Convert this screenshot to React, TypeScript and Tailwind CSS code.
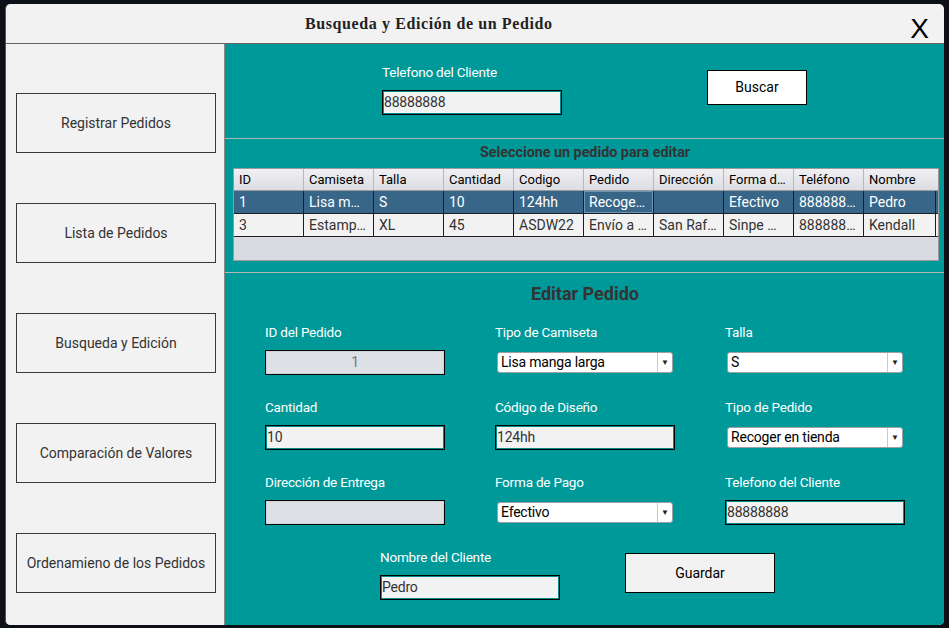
const sideButtons = [
  "Registrar Pedidos",
  "Lista de Pedidos",
  "Busqueda y Edición",
  "Comparación de Valores",
  "Ordenamieno de los Pedidos",
];

const columns = [
  "ID",
  "Camiseta",
  "Talla",
  "Cantidad",
  "Codigo",
  "Pedido",
  "Dirección",
  "Forma de Pago",
  "Teléfono",
  "Nombre",
];

const rows = [
  ["1", "Lisa manga larga", "S", "10", "124hh", "Recoger en tienda", "", "Efectivo", "88888888", "Pedro"],
  ["3", "Estampada", "XL", "45", "ASDW22", "Envío a domicilio", "San Rafael", "Sinpe Móvil", "88888888", "Kendall"],
];

const font = { fontFamily: "Roboto, 'Liberation Sans', sans-serif" };

function Label({ text }: { text: string }) {
  return (
    <div className="h-[16px] text-[13.5px] leading-[16px] text-white tracking-[-0.2px]">
      {text}
    </div>
  );
}

function TextField({ value, disabled }: { value: string; disabled?: boolean }) {
  return (
    <div
      className={`mt-[10px] w-[180px] h-[25px] border border-black flex items-center text-[14px] tracking-[-0.2px] ${
        disabled
          ? "bg-[#dde0e5] justify-center text-[#777] shadow-[inset_0_0_0_1px_#d0d4da]"
          : "bg-[#f2f2f2] text-[#333] shadow-[inset_0_0_0_1px_#0a8a8a]"
      }`}
    >
      <span className={disabled ? "" : "pl-[1px]"}>{value}</span>
    </div>
  );
}

function Dropdown({ value }: { value: string }) {
  return (
    <div className="mt-[12px] ml-[2px] mb-[2px] w-[176px] h-[21px] bg-white border border-[#9aa0a6] rounded-[3px] flex items-center text-[14px] text-black">
      <span className="flex-1 pl-[3px] tracking-[-0.2px]">{value}</span>
      <span className="w-[15px] h-full border-l border-[#c8c8c8] flex items-center justify-center text-[8px] text-[#222]">
        ▼
      </span>
    </div>
  );
}

function Field({
  label,
  value,
  kind,
}: {
  label: string;
  value: string;
  kind: "text" | "disabled" | "select";
}) {
  return (
    <div className="flex flex-col">
      <Label text={label} />
      {kind === "select" ? (
        <Dropdown value={value} />
      ) : (
        <TextField value={value} disabled={kind === "disabled"} />
      )}
    </div>
  );
}

export default function App() {
  return (
    <div className="w-[949px] h-[628px] bg-[#0d1117] pt-[4px] pl-[5px]" style={font}>
      <div className="w-[939px] h-[621px] rounded-[5px] overflow-hidden flex flex-col bg-[#f2f2f2] border-l border-[#555]">
        {/* barra de titulo */}
        <div className="h-[40px] flex items-center border-b border-[#666] shrink-0">
          <span
            className="pl-[299px] pt-[1px] text-[16px] font-bold text-[#222] tracking-[0.6px]"
            style={{ fontFamily: "'Liberation Serif', serif" }}
          >
            Busqueda y Edición de un Pedido
          </span>
          <span
            className="ml-auto mr-[15px] mt-[11px] text-[28px] leading-none text-black"
            style={{ fontFamily: "'Liberation Sans', sans-serif" }}
          >
            X
          </span>
        </div>

        <div className="flex flex-1">
          {/* menu lateral */}
          <div className="w-[219px] shrink-0 bg-[#f2f2f2] border-r border-[#8a8a8a] pl-[10px] pt-[49px] flex flex-col gap-[50px]">
            {sideButtons.map((b) => (
              <div
                key={b}
                className="w-[200px] h-[60px] border border-[#3a3a3a] flex items-center justify-center text-[14px] text-[#333]"
              >
                {b}
              </div>
            ))}
          </div>

          {/* panel principal */}
          <div className="flex-1 bg-[#009999] flex flex-col">
            {/* busqueda */}
            <div className="h-[94px] flex pl-[157px]">
              <div className="pt-[20px]">
                <Label text="Telefono del Cliente" />
                <TextField value="88888888" />
              </div>
              <div className="pt-[26px] ml-[145px]">
                <div className="w-[100px] h-[35px] bg-white border border-black flex items-center justify-center text-[14px] text-black">
                  Buscar
                </div>
              </div>
            </div>
            <div className="h-px bg-[#b4b4b4]" />

            {/* tabla */}
            <div className="h-[133px] flex flex-col">
              <div className="mt-[5px] h-[17px] pr-[10px] text-center text-[14.3px] leading-[17px] font-bold text-[#333]">
                Seleccione un pedido para editar
              </div>
              <div className="mt-[7px] ml-[8px] w-[706px] h-[93px] border border-[#9a9a9a] bg-[#d8dbe2] flex flex-col">
                <div className="flex h-[22px] bg-gradient-to-b from-[#f0f0f3] to-[#dcdde2] border-b border-[#9a9a9a]">
                  {columns.map((c, i) => (
                    <div
                      key={c}
                      className={`${i === 9 ? "w-[72px]" : "w-[70px] border-r border-[#b8b8b8]"} shrink-0 min-w-0 overflow-hidden whitespace-nowrap text-ellipsis pl-[5px] pr-[6px] text-[13px] leading-[21px] text-black`}
                    >
                      {c}
                    </div>
                  ))}
                </div>
                {rows.map((r, ri) => (
                  <div
                    key={ri}
                    className={`flex h-[23px] border-b border-[#1e1e1e] ${
                      ri === 0 ? "bg-[#386689] text-white" : "bg-[#f2f2f2] text-[#333]"
                    }`}
                  >
                    {r.map((cell, ci) => (
                      <div
                        key={ci}
                        className={`${ci === 9 ? "w-[72px]" : "w-[70px]"} shrink-0 min-w-0 border-r border-[#1e1e1e] pl-[5px] pr-[6px] text-[14px] leading-[22px] overflow-hidden whitespace-nowrap text-ellipsis ${
                          ri === 0 && ci === 5 ? "shadow-[inset_0_0_0_1px_#6a94b8]" : ""
                        }`}
                      >
                        {cell}
                      </div>
                    ))}
                  </div>
                ))}
              </div>
            </div>
            <div className="h-px bg-[#b4b4b4]" />

            {/* editar */}
            <div className="flex-1 flex flex-col">
              <div className="mt-[10px] pr-[10px] text-center text-[18px] leading-[21px] font-bold text-[#333]">
                Editar Pedido
              </div>
              <div className="mt-[20px] pl-[40px] grid grid-cols-[230px_230px_230px] gap-y-[24px]">
                <Field label="ID del Pedido" value="1" kind="disabled" />
                <Field label="Tipo de Camiseta" value="Lisa manga larga" kind="select" />
                <Field label="Talla" value="S" kind="select" />
                <Field label="Cantidad" value="10" kind="text" />
                <Field label="Código de Diseño" value="124hh" kind="text" />
                <Field label="Tipo de Pedido" value="Recoger en tienda" kind="select" />
                <Field label="Dirección de Entrega" value="" kind="disabled" />
                <Field label="Forma de Pago" value="Efectivo" kind="select" />
                <Field label="Telefono del Cliente" value="88888888" kind="text" />
              </div>
              <div className="mt-[24px] pl-[155px] flex">
                <Field label="Nombre del Cliente" value="Pedro" kind="text" />
                <div className="ml-[65px] mt-[4px] w-[150px] h-[40px] bg-[#f2f2f2] border border-black flex items-center justify-center text-[14px] text-black">
                  Guardar
                </div>
              </div>
            </div>
          </div>
        </div>
      </div>
    </div>
  );
}
